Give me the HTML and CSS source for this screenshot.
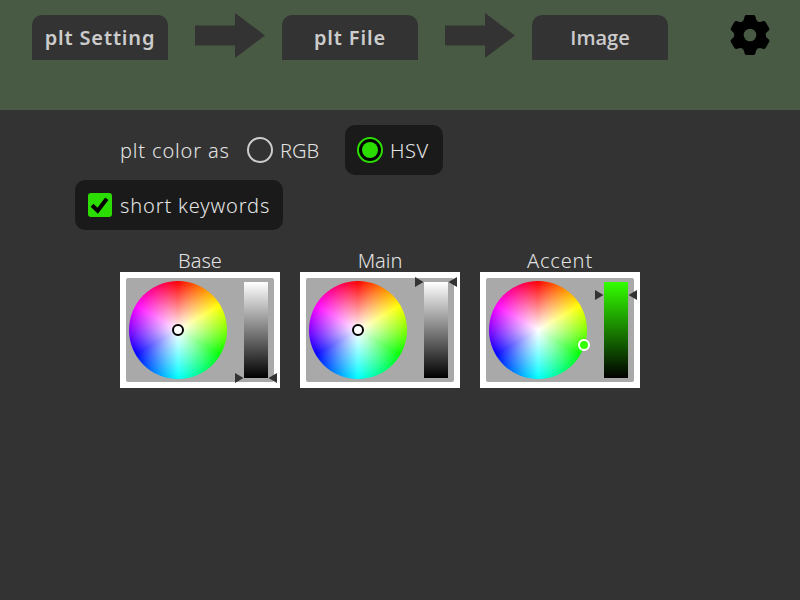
FILE: index.html
```html
<!DOCTYPE html>
<html lang="en">
<head>
<meta charset="utf-8">
<title>plt Setting</title>
<link rel="stylesheet" href="styles.css">
</head>
<body>
<header class="topbar">
  <nav class="steps">
    <a class="tab"><span class="t-wide">plt Setting</span></a>
    <svg class="arrow" width="70" height="45" viewBox="0 0 70 45"><path d="M0 12.5H40V0L70 22.5L40 45V32.5H0Z"/></svg>
    <a class="tab"><span class="t-wide">plt File</span></a>
    <svg class="arrow" width="70" height="45" viewBox="0 0 70 45"><path d="M0 12.5H40V0L70 22.5L40 45V32.5H0Z"/></svg>
    <a class="tab"><span class="t-image">Image</span></a>
  </nav>
  <svg class="gear" width="40" height="40" viewBox="-20 -20 40 40">
    <defs>
      <path id="tooth" d="M0 0L-7.85 -13.6Q-6.2 -14.6 -5.9 -16.2L-5.4 -18.6Q-5 -20 -3.5 -20H3.5Q5 -20 5.4 -18.6L5.9 -16.2Q6.2 -14.6 7.85 -13.6Z"/>
      <mask id="hole"><rect x="-20" y="-20" width="40" height="40" fill="#fff"/><circle r="6.3" fill="#000"/></mask>
    </defs>
    <g mask="url(#hole)">
      <circle r="15"/>
      <use href="#tooth"/><use href="#tooth" transform="rotate(60)"/><use href="#tooth" transform="rotate(120)"/>
      <use href="#tooth" transform="rotate(180)"/><use href="#tooth" transform="rotate(240)"/><use href="#tooth" transform="rotate(300)"/>
    </g>
  </svg>
</header>
<main class="content">
  <div class="row mode">
    <span class="label t-wide">plt color as</span>
    <label class="option">
      <svg width="26" height="26" viewBox="0 0 26 26"><circle cx="13" cy="13" r="12" fill="none" stroke="#ccc" stroke-width="2"/></svg>
      <span class="text">RGB</span>
    </label>
    <label class="option selected">
      <svg width="26" height="26" viewBox="0 0 26 26"><circle cx="13" cy="13" r="12" fill="#000" stroke="#2bdd00" stroke-width="2"/><circle cx="13" cy="13" r="8" fill="#2bdd00"/></svg>
      <span class="text t-hsv">HSV</span>
    </label>
  </div>
  <label class="check selected">
    <svg width="24" height="24" viewBox="0 0 24 24"><rect width="24" height="24" rx="3" fill="#2bdd00"/><path d="M4 12.2L9.7 17.8L18.8 5.8" fill="none" stroke="#000" stroke-width="4"/></svg>
    <span class="text t-wide">short keywords</span>
  </label>
  <section class="pickers">
    <div class="picker">
      <h2>Base</h2>
      <div class="frame"><div class="panel">
        <div class="wheel"><i class="marker center"></i></div>
        <div class="value gray"><svg class="pointer low" width="42" height="10" viewBox="0 0 42 10"><path d="M0 0L8.5 5L0 10ZM42 0L33.5 5L42 10Z"/></svg></div>
      </div></div>
    </div>
    <div class="picker">
      <h2>Main</h2>
      <div class="frame"><div class="panel">
        <div class="wheel"><i class="marker center"></i></div>
        <div class="value gray"><svg class="pointer high" width="42" height="10" viewBox="0 0 42 10"><path d="M0 0L8.5 5L0 10ZM42 0L33.5 5L42 10Z"/></svg></div>
      </div></div>
    </div>
    <div class="picker">
      <h2 class="t-wide">Accent</h2>
      <div class="frame"><div class="panel">
        <div class="wheel"><i class="marker edge"></i></div>
        <div class="value green"><svg class="pointer upper" width="42" height="10" viewBox="0 0 42 10"><path d="M0 0L8.5 5L0 10ZM42 0L33.5 5L42 10Z"/></svg></div>
      </div></div>
    </div>
  </section>
</main>
</body>
</html>
```
FILE: styles.css
```css
* { box-sizing: border-box; }
body {
  margin: 0;
  height: 600px;
  overflow: hidden;
  background: #333;
  color: #e4e4e4;
  font: 300 20px/30px "Noto Sans", "Open Sans", sans-serif;
  white-space: nowrap;
}
svg { display: block; flex: none; }
.topbar {
  height: 110px;
  padding: 12.5px 30px 0 32px;
  background: #485a43;
  display: flex;
  justify-content: space-between;
}
.steps { display: flex; align-items: flex-start; }
.tab {
  width: 136px;
  height: 45px;
  margin-top: 2.5px;
  border-radius: 10px 10px 0 0;
  background: #333;
  color: #ccc;
  font-weight: 600;
  line-height: 45px;
  text-align: center;
}
.arrow { margin: 0 17px 0 27px; fill: #333; }
.gear { margin-top: 2.5px; }
.t-wide { letter-spacing: 0.85px; }
.t-hsv { letter-spacing: 0.6px; }
.t-image { font-family: "Open Sans", sans-serif; }
.content { padding: 15px 0 0 75px; }
.row { display: flex; height: 50px; align-items: center; }
.label { width: 172px; padding: 2px 0 0 45px; }
.text { padding-top: 2px; }
.option { display: flex; align-items: center; gap: 7px; width: 98px; height: 50px; }
.mode .selected { padding-left: 12px; }
.selected { background: #1a1a1a; border-radius: 10px; }
.check {
  display: flex;
  align-items: center;
  gap: 8px;
  width: 208px;
  height: 50px;
  margin-top: 5px;
  padding-left: 13px;
}
.pickers { display: flex; gap: 20px; padding: 16px 0 0 45px; }
h2 { margin: 0; height: 26px; font: inherit; text-align: center; }
.frame { width: 160px; height: 116px; padding: 6px; background: #fff; }
.panel {
  display: flex;
  gap: 17px;
  width: 148px;
  height: 104px;
  padding: 3px 0 0 3px;
  border-radius: 2px;
  background: #a9a9a9;
}
.wheel {
  position: relative;
  width: 98px;
  height: 98px;
  border-radius: 50%;
  background:
    radial-gradient(circle closest-side, #fff, rgba(255, 255, 255, 0)),
    conic-gradient(#f00, #ff0, #0f0, #0ff, #00f, #f0f, #f00);
}
.marker {
  position: absolute;
  width: 12px;
  height: 12px;
  border: 2px solid #000;
  border-radius: 50%;
  background: #fff;
}
.center { left: 43px; top: 43px; }
.edge { left: 89px; top: 58px; border-color: #fff; background: #3f0; }
.value { position: relative; width: 24px; height: 96px; margin-top: 1px; }
.gray { background: linear-gradient(#fff, #000); }
.green { background: linear-gradient(#3f0, #000); }
.pointer { position: absolute; left: -9px; fill: #333; }
.low { top: 91px; }
.high { top: -5px; }
.upper { top: 8px; }
```
